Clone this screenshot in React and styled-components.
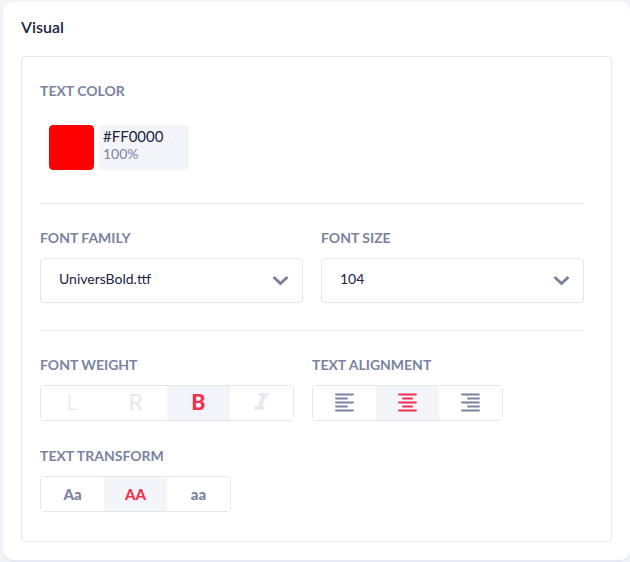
import React, { useState } from 'react';
import styled, { createGlobalStyle } from 'styled-components';

const GlobalStyle = createGlobalStyle`
  * {
    box-sizing: border-box;
  }
  body {
    margin: 0;
    background: #f0f4f9;
    font-family: Lato, "Liberation Sans", sans-serif;
    color: #1b2440;
  }
  button, input, select {
    font-family: inherit;
  }
`;

const Card = styled.section`
  margin: 2px 0 2px 3px;
  padding: 15px 18px 18px;
  border-radius: 10px;
  background: #fff;
  box-shadow: 0 2px 1px #e6eaf0;
`;

const Title = styled.h2`
  margin: 0 0 19px;
  font-size: 16px;
  line-height: 20px;
  font-weight: 600;
`;

const Panel = styled.div`
  padding: 24px 27px 29px 18px;
  border: 1px solid #e6e6e9;
  border-radius: 4px;
`;

const Section = styled.div`
  display: flex;
  flex-wrap: wrap;
  gap: 25px 18px;
`;

const Divider = styled.hr`
  margin: ${(props) => props.$top}px 0 24px;
  border: 0;
  border-top: 1px solid #e6e6e9;
`;

const Field = styled.div`
  flex: ${(props) => (props.$grow ? '1 1 0' : '0 0 auto')};
  min-width: 0;
`;

const Label = styled.label`
  display: block;
  margin-bottom: 10px;
  font-size: 14px;
  line-height: 20px;
  font-weight: 700;
  color: #7a84a0;
`;

const ColorRow = styled.div`
  display: flex;
  gap: 5px;
  padding: 14px 9px 0;
`;

const Swatch = styled.input`
  width: 45px;
  height: 45px;
  padding: 0;
  border: 0;
  border-radius: 4px;
  background: none;
  cursor: pointer;
  &::-webkit-color-swatch-wrapper {
    padding: 0;
  }
  &::-webkit-color-swatch {
    border: 0;
    border-radius: 4px;
  }
`;

const ColorValue = styled.div`
  display: flex;
  flex-direction: column;
  width: 90px;
  height: 45px;
  padding: 2px 4px;
  border-radius: 4px;
  background: #f4f5fa;
`;

const ValueInput = styled.input`
  width: 100%;
  height: 18px;
  padding: 0;
  border: 0;
  outline: none;
  background: none;
  font-size: ${(props) => (props.$muted ? 14 : 15)}px;
  line-height: 18px;
  color: ${(props) => (props.$muted ? '#7a84a0' : '#1b2440')};
`;

const SelectBox = styled.div`
  display: grid;
  align-items: center;
  > * {
    grid-area: 1 / 1;
  }
  svg {
    justify-self: end;
    margin-right: 13px;
    pointer-events: none;
  }
`;

const Select = styled.select`
  appearance: none;
  width: 100%;
  height: 45px;
  padding: 0 40px 5px 18px;
  border: 1px solid #e6e6e9;
  border-radius: 4px;
  background: #fff;
  font-size: 14px;
  color: #1b2440;
`;

const Group = styled.div`
  display: flex;
  width: max-content;
  height: 36px;
  border: 1px solid #e6e6e9;
  border-radius: 4px;
  overflow: hidden;
`;

const Segment = styled.button`
  display: flex;
  align-items: center;
  justify-content: center;
  width: 63px;
  padding: 0;
  border: 0;
  background: ${(props) => (props.$active ? '#f4f5fa' : '#fff')};
  color: ${(props) => (props.$active ? '#f0324f' : props.$faded ? '#e6e8ed' : '#7a84a0')};
  font-size: 15px;
  font-weight: 900;
  cursor: pointer;
`;

const Letter = styled.span`
  font-family: Roboto, sans-serif;
  font-size: 22px;
  line-height: 32px;
  font-weight: ${(props) => props.$weight};
`;

const Chevron = () => (
  <svg width="18" height="12" viewBox="0 0 18 12" fill="none" aria-hidden="true">
    <path d="M1.5 2L8.5 8.5L15.5 2" stroke="#7a84a0" strokeWidth="3" />
  </svg>
);

const ItalicIcon = () => (
  <svg width="16" height="20" viewBox="0 0 16 20" fill="currentColor" aria-hidden="true">
    <path d="M5 0H15L14.4 3.2H11.9L8.1 13.2H10.6L10 16.4H0L0.6 13.2H3.5L7.3 3.2H4.4Z" />
  </svg>
);

const shortLines = { left: [1, 12], center: [5, 14], right: [7, 18] };

const AlignIcon = ({ align }) => {
  const [start, end] = shortLines[align];
  return (
    <svg
      width="19"
      height="20"
      viewBox="0 0 19 20"
      stroke="currentColor"
      strokeWidth="1.8"
      strokeLinecap="round"
      aria-hidden="true"
    >
      <path d={`M1 1.5H18M${start} 5.5H${end}M1 9.5H18M${start} 13.5H${end}M1 17.5H18`} />
    </svg>
  );
};

const weights = [
  { value: 'Light', content: <Letter $weight={300}>L</Letter> },
  { value: 'Regular', content: <Letter $weight={400}>R</Letter> },
  { value: 'Bold', content: <Letter $weight={700}>B</Letter> },
  { value: 'Italic', content: <ItalicIcon /> },
];

const alignments = ['left', 'center', 'right'].map((align) => ({
  value: align,
  content: <AlignIcon align={align} />,
}));

const transforms = [
  { value: 'capitalize', content: 'Aa' },
  { value: 'uppercase', content: 'AA' },
  { value: 'lowercase', content: 'aa' },
];

const SegmentedField = ({ id, label, options, initial, faded }) => {
  const [selected, setSelected] = useState(initial);

  return (
    <Field>
      <Label as="div" id={id}>{label}</Label>
      <Group role="group" aria-labelledby={id}>
        {options.map(({ value, content }) => (
          <Segment
            key={value}
            type="button"
            aria-label={value}
            aria-pressed={selected === value}
            $active={selected === value}
            $faded={faded}
            onClick={() => setSelected(value)}
          >
            {content}
          </Segment>
        ))}
      </Group>
    </Field>
  );
};

const SelectField = ({ id, label, value }) => (
  <Field $grow>
    <Label htmlFor={id}>{label}</Label>
    <SelectBox>
      <Select id={id} defaultValue={value}>
        <option value={value}>{value}</option>
      </Select>
      <Chevron />
    </SelectBox>
  </Field>
);

const App = () => {
  const [color, setColor] = useState('#FF0000');

  return (
    <>
      <GlobalStyle />
      <Card>
        <Title>Visual</Title>
        <Panel>
          <Label htmlFor="text-color">TEXT COLOR</Label>
          <ColorRow>
            <Swatch
              id="text-color"
              type="color"
              value={color.toLowerCase()}
              onChange={(e) => setColor(e.target.value.toUpperCase())}
            />
            <ColorValue>
              <ValueInput aria-label="Hex" value={color} onChange={(e) => setColor(e.target.value)} />
              <ValueInput aria-label="Opacity" defaultValue="100%" $muted />
            </ColorValue>
          </ColorRow>
          <Divider $top={33} />
          <Section>
            <SelectField id="font-family" label="FONT FAMILY" value="UniversBold.ttf" />
            <SelectField id="font-size" label="FONT SIZE" value="104" />
          </Section>
          <Divider $top={27} />
          <Section>
            <SegmentedField id="font-weight" label="FONT WEIGHT" options={weights} initial="Bold" faded />
            <SegmentedField id="text-alignment" label="TEXT ALIGNMENT" options={alignments} initial="center" />
            <SegmentedField id="text-transform" label="TEXT TRANSFORM" options={transforms} initial="uppercase" />
          </Section>
        </Panel>
      </Card>
    </>
  );
};

export default App;
